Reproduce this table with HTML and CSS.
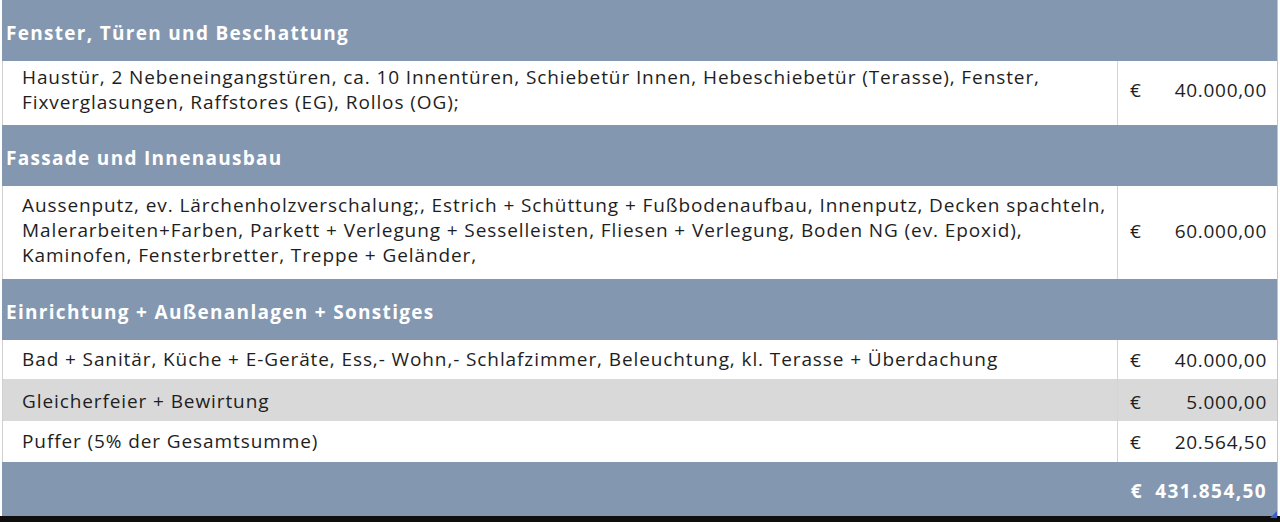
FILE: index.html
```html
<!DOCTYPE html>
<html lang="de">
<head>
<meta charset="utf-8">
<title>Kostenaufstellung</title>
<link rel="stylesheet" href="styles.css">
</head>
<body>
<div class="sheet">
  <div class="head h1"><span>Fenster, Türen und Beschattung</span></div>
  <div class="row r1">
    <div class="desc">Haustür, 2 Nebeneingangstüren, ca. 10 Innentüren, Schiebetür Innen, Hebeschiebetür (Terasse), Fenster,<br>Fixverglasungen, Raffstores (EG), Rollos (OG);</div>
    <div class="amt"><span class="eur">€</span><span class="val">40.000,00</span></div>
  </div>
  <div class="head h2"><span>Fassade und Innenausbau</span></div>
  <div class="row r2">
    <div class="desc">Aussenputz, ev. Lärchenholzverschalung;, Estrich + Schüttung + Fußbodenaufbau, Innenputz, Decken spachteln,<br>Malerarbeiten+Farben, Parkett + Verlegung + Sesselleisten, Fliesen + Verlegung, Boden NG (ev. Epoxid),<br>Kaminofen, Fensterbretter, Treppe + Geländer,</div>
    <div class="amt"><span class="eur">€</span><span class="val">60.000,00</span></div>
  </div>
  <div class="head h3"><span>Einrichtung + Außenanlagen + Sonstiges</span></div>
  <div class="row r3">
    <div class="desc">Bad + Sanitär, Küche + E-Geräte, Ess,- Wohn,- Schlafzimmer, Beleuchtung, kl. Terasse + Überdachung</div>
    <div class="amt"><span class="eur">€</span><span class="val">40.000,00</span></div>
  </div>
  <div class="row r4 grey">
    <div class="desc">Gleicherfeier + Bewirtung</div>
    <div class="amt"><span class="eur">€</span><span class="val">5.000,00</span></div>
  </div>
  <div class="row r5">
    <div class="desc">Puffer (5% der Gesamtsumme)</div>
    <div class="amt"><span class="eur">€</span><span class="val">20.564,50</span></div>
  </div>
  <div class="foot">
    <div class="total">€ 431.854,50</div>
    <div class="handle"></div>
  </div>
</div>
<div class="bottom"></div>
</body>
</html>
```

FILE: styles.css
```css
html, body {
  margin: 0;
  padding: 0;
  background: #ffffff;
}
body {
  width: 1280px;
  height: 522px;
  overflow: hidden;
  font-family: "Open Sans", "Noto Sans", "Liberation Sans", sans-serif;
  font-size: 19px;
  letter-spacing: 0.9px;
  color: #1e1e1e;
}
.sheet {
  position: relative;
  margin-left: 2px;
  width: 1275px;
  border-right: 1px solid #c4c4c4;
  display: flex;
  flex-direction: column;
}
.head {
  background: #8497b0;
  color: #ffffff;
  font-weight: 700;
  letter-spacing: 1.3px;
  height: 61px;
  display: flex;
  align-items: center;
  padding-left: 4px;
  padding-top: 4px;
  box-sizing: border-box;
}
.row {
  display: grid;
  grid-template-columns: 1115px 1fr;
  background: #ffffff;
  border-left: 1px solid #d0d0d0;
  box-sizing: border-box;
}
.row.grey {
  background: #d9d9d9;
}
.desc {
  border-right: 1px solid #d4d4d4;
  padding-left: 19px;
  line-height: 25px;
  display: flex;
  align-items: center;
}
.amt {
  display: flex;
  align-items: center;
  justify-content: space-between;
  padding-left: 12px;
  padding-right: 10px;
  letter-spacing: 0.7px;
}
.r1 { height: 64px; }
.r2 { height: 93px; }
.r3 { height: 39px; }
.r4 { height: 42px; }
.r5 { height: 41px; }
.r1 .desc, .r1 .amt { padding-bottom: 6px; }
.r2 .desc, .r2 .amt { padding-bottom: 4px; }
.r4 .desc, .r4 .amt { padding-top: 3px; }
.foot {
  background: #8497b0;
  height: 54px;
  display: flex;
  align-items: center;
  justify-content: flex-end;
  padding-right: 10px;
  padding-top: 4px;
  box-sizing: border-box;
  color: #ffffff;
  font-weight: 700;
  letter-spacing: 1.4px;
  word-spacing: 6px;
}
.handle {
  position: absolute;
  right: 0;
  bottom: -2px;
  width: 7px;
  height: 7px;
  background: #3c5ec8;
  clip-path: polygon(100% 0, 100% 100%, 0 100%);
}
.bottom {
  height: 6px;
  background: #0e0e0e;
}
```
